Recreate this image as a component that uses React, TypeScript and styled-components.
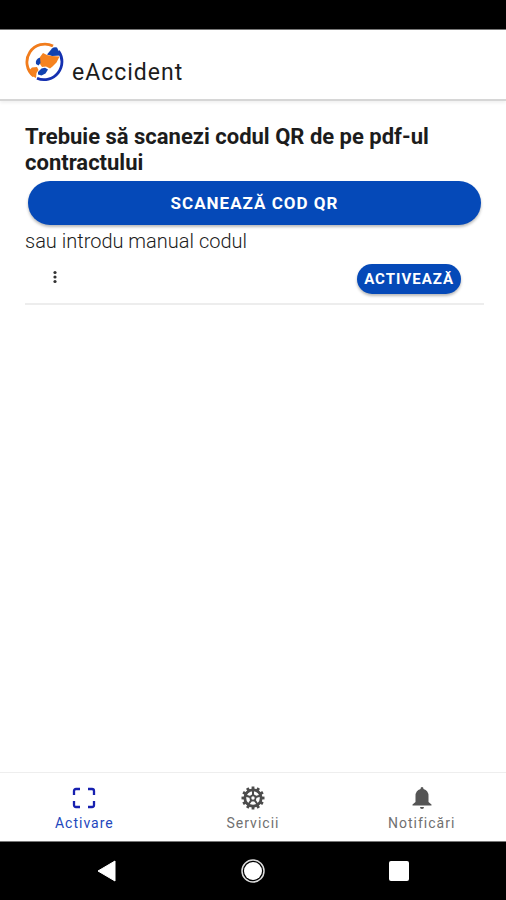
import React, { useState } from "react";
import styled, { createGlobalStyle } from "styled-components";

const GlobalStyle = createGlobalStyle`
  * { box-sizing: border-box; }
  body { margin: 0; background: #fff; color: #1c1c1c; font-family: Roboto, "Liberation Sans", sans-serif; }
  button, input { font-family: inherit; }
`;

const Screen = styled.div`
  display: flex;
  flex-direction: column;
  min-height: 100vh;
`;

const StatusBar = styled.div`
  height: 30px;
  background: #000;
  border-bottom: 1px solid #777;
`;

const Header = styled.header`
  display: flex;
  align-items: center;
  gap: 7px;
  height: 71px;
  padding: 0 25px 6px;
  border-bottom: 2px solid #d6d6d6;
  box-shadow: 0 2px 3px rgba(0, 0, 0, 0.06);
`;

const AppTitle = styled.h1`
  margin: 0;
  padding-top: 22px;
  font-size: 23px;
  line-height: 28px;
  font-weight: 400;
  letter-spacing: 1px;
`;

const Content = styled.main`
  display: flex;
  flex: 1;
  flex-direction: column;
  padding: 23px 22px 0 25px;
`;

const Heading = styled.h2`
  margin: 0 0 5px;
  font-size: 22px;
  line-height: 26px;
  font-weight: 700;
`;

const PillButton = styled.button<{ $wide?: boolean }>`
  flex: none;
  height: ${(p) => (p.$wide ? 44 : 30)}px;
  margin: ${(p) => (p.$wide ? "0 3px" : "0")};
  padding: 0 7px;
  border: 0;
  border-radius: 22px;
  background: #0549b8;
  color: #fff;
  font-size: ${(p) => (p.$wide ? 17 : 15)}px;
  font-weight: 700;
  letter-spacing: 1px;
  box-shadow: 0 2px 3px rgba(0, 0, 0, 0.28);
`;

const CodeLabel = styled.label`
  margin-top: 3px;
  font-size: 20px;
  line-height: 26px;
  font-weight: 300;
`;

const CodeRow = styled.form`
  display: flex;
  align-items: center;
  height: 51px;
  padding: 0 23px 0 16px;
  border-bottom: 2px solid #ededed;
`;

const MenuButton = styled.button`
  display: grid;
  place-items: center;
  width: 28px;
  height: 28px;
  margin-bottom: 4px;
  padding: 0;
  border: 0;
  background: none;
`;

const CodeInput = styled.input`
  flex: 1;
  min-width: 0;
  height: 32px;
  padding: 0 8px;
  border: 0;
  outline: 0;
  background: transparent;
  font-size: 20px;
`;

const TabBar = styled.nav`
  display: grid;
  grid-template-columns: repeat(3, 1fr);
  height: 69px;
  border-top: 1px solid #eee;
`;

const Tab = styled.button<{ $active: boolean }>`
  display: flex;
  flex-direction: column;
  align-items: center;
  gap: 3px;
  padding: 13px 0 0;
  border: 0;
  background: none;
  color: ${(p) => (p.$active ? "#2347bd" : "#707070")};
  font-size: 14px;
  line-height: 20px;
  letter-spacing: 1px;
`;

const SystemBar = styled.nav`
  display: grid;
  grid-template-columns: repeat(3, 146px);
  justify-content: center;
  align-items: center;
  height: 59px;
  border-top: 1px solid #777;
  background: #000;
`;

const SystemButton = styled.button`
  display: grid;
  place-items: center;
  height: 48px;
  padding: 0;
  border: 0;
  background: none;
`;

const Logo = () => (
  <svg width="40" height="40" viewBox="0 0 40 40" aria-hidden="true">
    <path d="M8.5 34A18 18 0 0 1 28 4" fill="none" stroke="#f17c1c" strokeWidth="2.8" />
    <path d="M33.5 9A18 18 0 0 1 12 36.2" fill="none" stroke="#1530b0" strokeWidth="2.8" />
    <path d="M22 12.5L27 6.5Q29 4.5 32 5.5L35.8 13.5L27 14Z" fill="#1142b0" />
    <path d="M15 15L18 11L22 13L27 14L34.5 14.5L31.5 20.5L27.5 24.5L25 26.5L21 24.5L17 25L15 22Z" fill="#f5821f" />
    <path d="M15 15.5Q10 17 11 22L13.5 23.5L15.5 21Z" fill="#1142b0" />
    <path d="M4.5 28L7 25.5L12 25L13.5 28L11.5 31L11 36L8 34.5Z" fill="#f5821f" />
    <path d="M13 30L16.5 26.5L20 25.8L23 27.5L20.5 31.5L16.5 33.5L13 32.5Z" fill="#1142b0" />
  </svg>
);

const ScanIcon = () => (
  <svg width="24" height="24" viewBox="0 0 24 24" fill="none" stroke="#1720b0" strokeWidth="2.3" aria-hidden="true">
    <path d="M2 9V5Q2 3 4 3H8M16 3H20Q22 3 22 5V9M22 15V19Q22 21 20 21H16M8 21H4Q2 21 2 19V15" />
  </svg>
);

const teeth = Array.from({ length: 12 }, (_, i) => i * 30);
const spokes = [0, 72, 144, 216, 288];

const GearIcon = () => (
  <svg width="24" height="24" viewBox="0 0 24 24" fill="none" stroke="#4c4c4c" aria-hidden="true">
    {teeth.map((a) => (
      <path key={a} d="M12 0.5V4" strokeWidth="2.8" transform={`rotate(${a} 12 12)`} />
    ))}
    <circle cx="12" cy="12" r="8.2" strokeWidth="2.8" />
    <circle cx="12" cy="12" r="2.6" strokeWidth="1.8" />
    {spokes.map((a) => (
      <path key={a} d="M12 9V4" strokeWidth="2" transform={`rotate(${a} 12 12)`} />
    ))}
  </svg>
);

const BellIcon = () => (
  <svg width="24" height="24" viewBox="0 0 24 24" fill="#555" aria-hidden="true">
    <path d="M12 1Q13.5 1 13.5 3Q18.5 4.5 18.5 10V16L21.5 18.5V19.5H2.5V18.5L5.5 16V10Q5.5 4.5 10.5 3Q10.5 1 12 1Z" />
    <path d="M10 21H14Q14 23 12 23Q10 23 10 21Z" />
  </svg>
);

const tabs = [
  { label: "Activare", Icon: ScanIcon },
  { label: "Servicii", Icon: GearIcon },
  { label: "Notificări", Icon: BellIcon },
];

export default function App() {
  const [active, setActive] = useState("Activare");
  const [code, setCode] = useState("");

  return (
    <Screen>
      <GlobalStyle />
      <StatusBar />
      <Header>
        <Logo />
        <AppTitle>eAccident</AppTitle>
      </Header>
      <Content>
        <Heading>Trebuie să scanezi codul QR de pe pdf-ul contractului</Heading>
        <PillButton type="button" $wide>SCANEAZĂ COD QR</PillButton>
        <CodeLabel htmlFor="code">sau introdu manual codul</CodeLabel>
        <CodeRow onSubmit={(e) => e.preventDefault()}>
          <MenuButton type="button" aria-label="Opțiuni">
            <svg width="4" height="14" viewBox="0 0 4 14" fill="#333" aria-hidden="true">
              <circle cx="2" cy="2.5" r="1.6" />
              <circle cx="2" cy="7" r="1.6" />
              <circle cx="2" cy="11.5" r="1.6" />
            </svg>
          </MenuButton>
          <CodeInput id="code" value={code} onChange={(e) => setCode(e.target.value)} />
          <PillButton type="submit">ACTIVEAZĂ</PillButton>
        </CodeRow>
      </Content>
      <TabBar>
        {tabs.map(({ label, Icon }) => (
          <Tab key={label} type="button" $active={label === active} onClick={() => setActive(label)}>
            <Icon />
            {label}
          </Tab>
        ))}
      </TabBar>
      <SystemBar>
        <SystemButton type="button" aria-label="Înapoi">
          <svg width="20" height="22" viewBox="0 0 20 22" aria-hidden="true">
            <path d="M1 11L18 1V21Z" fill="#fff" stroke="#fff" strokeLinejoin="round" />
          </svg>
        </SystemButton>
        <SystemButton type="button" aria-label="Acasă">
          <svg width="24" height="24" viewBox="0 0 24 24" aria-hidden="true">
            <circle cx="12" cy="12" r="11" fill="none" stroke="#ddd" strokeWidth="1.5" />
            <circle cx="12" cy="12" r="9" fill="#fff" />
          </svg>
        </SystemButton>
        <SystemButton type="button" aria-label="Recente">
          <svg width="20" height="20" viewBox="0 0 20 20" aria-hidden="true">
            <rect width="20" height="20" rx="2" fill="#fff" />
          </svg>
        </SystemButton>
      </SystemBar>
    </Screen>
  );
}
